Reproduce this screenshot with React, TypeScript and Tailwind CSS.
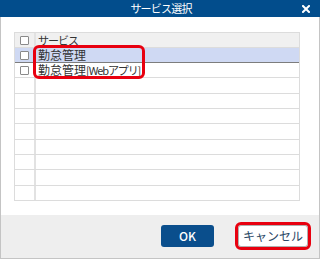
import React from "react";

const rowHeights = ["h-[15px]", "h-[15px]", "h-[16px]", "h-[15px]", "h-[15px]", "h-[16px]", "h-[15px]", "h-[15px]", "h-[16px]", "h-[15px]"];

function Box() {
  return <span className="block w-[9px] h-[9px] border border-[#8a8a8a] rounded-[1px] bg-white" />;
}

export default function App() {
  const labels: React.ReactNode[] = [
    "勤怠管理",
    <>
      勤怠管理<span className="text-[11px] tracking-[-1.1px]">[Webアプリ]</span>
    </>,
  ];
  return (
    <div className="w-[320px] h-[259px] flex flex-col bg-white text-[12px] font-['Noto_Sans_CJK_JP','Noto_Sans',sans-serif]">
      <div className="relative h-[17px] shrink-0 bg-[#024d8c] flex items-center justify-center text-white text-[11px] leading-none">
        <span className="pl-[2px] tracking-[-0.8px]">サービス選択</span>
        <svg className="absolute right-[10px] top-[5px]" width="8" height="8" viewBox="0 0 8 8">
          <path d="M1 1 L7 7 M7 1 L1 7" stroke="#fff" strokeWidth="2" strokeLinecap="square" />
        </svg>
      </div>
      <div className="flex-1 border-x border-[#c4c4c4] pt-[15px] pl-[13px] pr-[19px]">
        <div className="relative border-t border-x border-[#dcdcdc] text-[#333]">
          <div className="flex h-[15px] border-b border-[#dcdcdc] bg-[#f0f0f0]">
            <div className="w-[21px] shrink-0 border-r-2 border-[#e2e2e2] flex items-center justify-center">
              <Box />
            </div>
            <div className="flex items-center pl-[2px] leading-[14px] text-[11px] tracking-[-1px]">サービス</div>
          </div>
          {rowHeights.map((h, i) => (
            <div
              key={i}
              className={`flex ${h} border-b ${i === 0 ? "border-[#7d7d7d] bg-[#cfd9f3]" : "border-[#dcdcdc]"}`}
            >
              <div className={`w-[21px] shrink-0 border-r-2 ${i === 0 ? "border-[#c2cbe6]" : "border-[#e2e2e2]"} flex items-center justify-center`}>
                {i < 2 && <Box />}
              </div>
              <div className="flex items-center pl-[2px] leading-[14px] whitespace-nowrap">{labels[i] ?? ""}</div>
            </div>
          ))}
          <span className="absolute left-[18px] top-[12px] w-[112px] h-[34px] border-[3px] border-[#e8000f] rounded-[6px]" />
        </div>
      </div>
      <div className="h-[44px] shrink-0 bg-[#eeeeee] border-x border-b border-[#c4c4c4] flex justify-end items-start pt-[10px] pr-[11px] gap-[24px]">
        <button className="w-[53px] h-[22px] rounded-[3px] bg-[#0a4e8c] text-white text-[12px] font-medium leading-none">
          OK
        </button>
        <div className="relative">
          <button className="w-[70px] h-[22px] rounded-[3px] bg-white border border-[#b0b0b0] text-[#2b4766] text-[12px] leading-none">
            キャンセル
          </button>
          <span className="absolute -left-[3px] -top-[3px] w-[76px] h-[28px] border-[3px] border-[#e8000f] rounded-[6px]" />
        </div>
      </div>
    </div>
  );
}
